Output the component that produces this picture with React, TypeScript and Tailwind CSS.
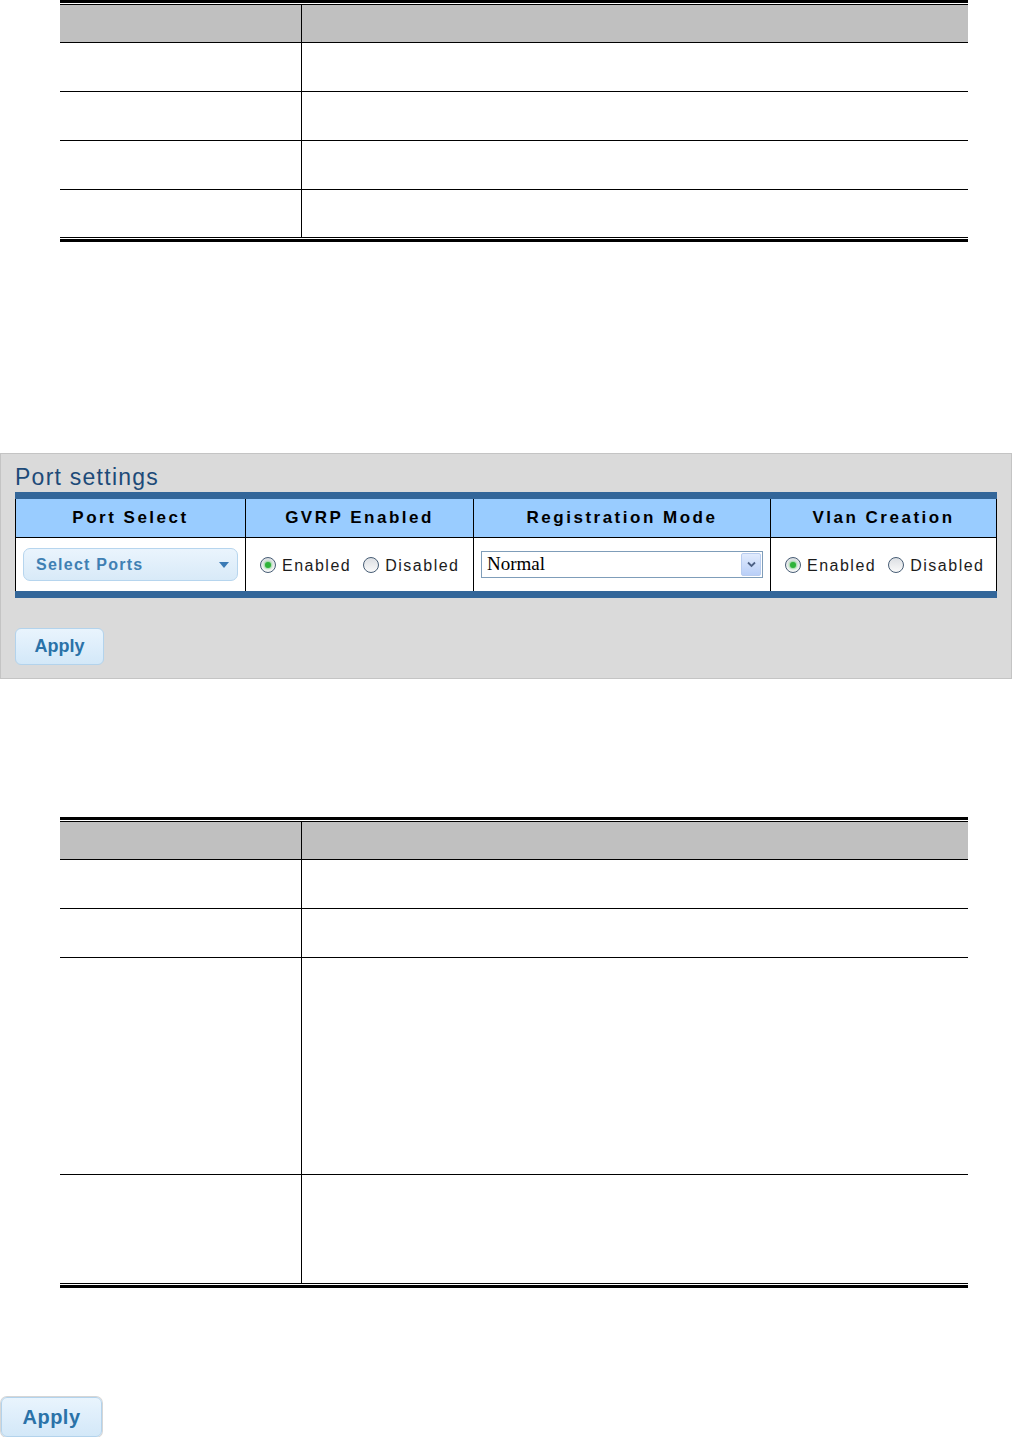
const sans = { fontFamily: '"Liberation Sans", Arial, sans-serif' }

function DocTable({ rows }: { rows: number[] }) {
  return (
    <div className="ml-[60px] w-[908px]">
      <div className="h-[3px] bg-black" />
      <div className="h-px" />
      <div className="h-px bg-black" />
      <div className="flex h-[38px] border-b border-black bg-[#c0c0c0]">
        <div className="w-[242px] border-r border-black" />
        <div className="flex-1" />
      </div>
      {rows.map((h, i) => (
        <div key={i} className="flex border-b border-black" style={{ height: h + 1 }}>
          <div className="w-[242px] border-r border-black" />
          <div className="flex-1" />
        </div>
      ))}
      <div className="h-px" />
      <div className="h-[3px] bg-black" />
    </div>
  )
}

function Radio({ checked, label }: { checked?: boolean; label: string }) {
  return (
    <label className="flex items-center">
      <span className="flex h-[16px] w-[16px] items-center justify-center rounded-full border-[1.5px] border-[#465c74] bg-gradient-to-b from-[#dcdfe3] to-[#fafafa]">
        {checked && (
          <span className="h-[6px] w-[6px] rounded-full bg-[#2fb33a] shadow-[0_0_2px_1px_rgba(80,200,90,0.6)]" />
        )}
      </span>
      <span className="ml-[6px] mt-[3px] text-[16px] tracking-[1.5px] text-[#1c1c1c]">{label}</span>
    </label>
  )
}

function BlueButton({ label, big }: { label: string; big?: boolean }) {
  return (
    <button
      className={
        big
          ? 'relative h-[40px] w-[101px] rounded-[6px] border border-[#b3d3ec] bg-gradient-to-b from-[#e9f4fd] via-[#deeefb] to-[#d3e8f8] text-[20px] font-bold tracking-[0.5px] text-[#2a72a8] shadow-[0_0_0_1px_#d6d6d6]'
          : 'relative h-[37px] w-[89px] rounded-[6px] border border-[#b3d3ec] bg-gradient-to-b from-[#e9f4fd] via-[#deeefb] to-[#d3e8f8] text-[18px] font-bold text-[#2a72a8]'
      }
    >
      {label}
    </button>
  )
}

export default function App() {
  return (
    <div className="w-[1012px] bg-white pb-[1px]" style={sans}>
      <DocTable rows={[48, 48, 48, 47]} />

      <section className="mt-[211px] border border-[#c4c4c4] bg-[#dadada] px-[14px] pb-[13px] pt-[10px]">
        <h2 className="h-[28px] text-[23px] leading-[27px] tracking-[1.25px] text-[#1d4a78]">Port settings</h2>

        <div className="w-[982px]">
          <div className="h-[7px] bg-[#336699]" />
          <div className="grid h-[39px] grid-cols-[230px_228px_297px_1fr] border-b border-black bg-[#99ccff] text-[17px] font-bold tracking-[2.5px] text-black">
            <div className="flex items-center justify-center border-l border-black">Port Select</div>
            <div className="flex items-center justify-center border-l border-black">GVRP Enabled</div>
            <div className="flex items-center justify-center border-l border-black">Registration Mode</div>
            <div className="flex items-center justify-center border-x border-black">Vlan Creation</div>
          </div>
          <div className="grid h-[53px] grid-cols-[230px_228px_297px_1fr] bg-white">
            <div className="flex items-center border-l border-black px-[7px]">
              <div className="flex h-[33px] w-full items-center justify-between rounded-[7px] border border-[#b6d5ee] bg-gradient-to-b from-[#eaf4fd] to-[#d8eaf8] pl-[12px] pr-[8px]">
                <span className="text-[16px] font-bold tracking-[1.25px] text-[#3f80b3]">Select Ports</span>
                <svg width="10" height="6" viewBox="0 0 10 6">
                  <path d="M0 0h10L5 6z" fill="#3a7ab5" />
                </svg>
              </div>
            </div>
            <div className="flex items-center gap-[12px] border-l border-black pl-[14px]">
              <Radio checked label="Enabled" />
              <Radio label="Disabled" />
            </div>
            <div className="flex items-center border-l border-black px-[7px]">
              <div className="flex h-[27px] w-full items-center justify-between border border-[#7f9db9] bg-white pl-[5px] pr-[1px]">
                <span className="text-[19px] text-black" style={{ fontFamily: '"Liberation Serif", "Times New Roman", serif' }}>
                  Normal
                </span>
                <span className="flex h-[23px] w-[20px] items-center justify-center rounded-[2px] border border-[#b9cdf0] bg-gradient-to-b from-[#e1ebfd] to-[#b9cff8]">
                  <svg width="9" height="7" viewBox="0 0 9 7">
                    <path d="M1 1.5l3.5 3.5L8 1.5" fill="none" stroke="#4d6185" strokeWidth="1.8" />
                  </svg>
                </span>
              </div>
            </div>
            <div className="flex items-center gap-[12px] border-x border-black pl-[14px]">
              <Radio checked label="Enabled" />
              <Radio label="Disabled" />
            </div>
          </div>
          <div className="h-[7px] bg-[#336699]" />
        </div>

        <div className="mt-[30px]">
          <BlueButton label="Apply" />
        </div>
      </section>

      <div className="mt-[138px]">
        <DocTable rows={[48, 48, 216, 108]} />
      </div>

      <div className="ml-[1px] mt-[109px]">
        <BlueButton big label="Apply" />
      </div>
    </div>
  )
}
